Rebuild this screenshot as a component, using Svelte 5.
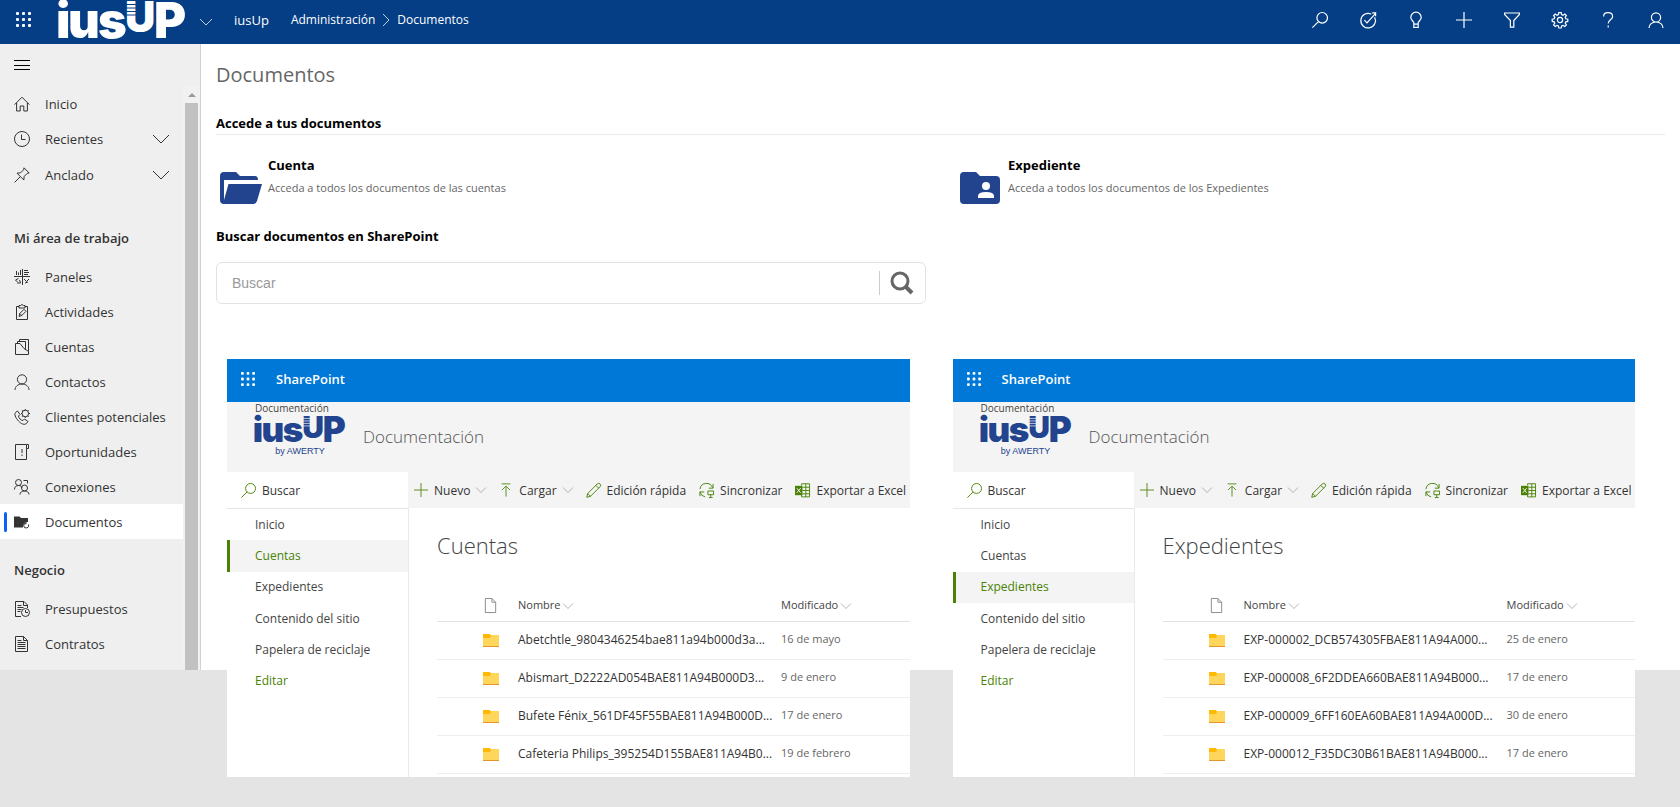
<script lang="ts">
  interface Doc {
    name: string;
    date: string;
  }
  interface Library {
    title: string;
    docs: Doc[];
  }

  // 16x16 line icons, drawn with the current colour.
  const ICONS: Record<string, string> = {
    search: "M15.5 5.8a5.3 5.3 0 1 1-10.6 0a5.3 5.3 0 0 1 10.6 0ZM6.4 9.6L.4 15.6",
    target: "M14.6 5.2A7.3 7.3 0 1 1 11.2 2M4.4 8.2l2.6 2.6L15.6 1.4M12.2.8h3.4v3.4",
    bulb: "M5.8 12V10.6C5.2 8.8 2.8 8 2.8 5.4a5.2 5.2 0 0 1 10.4 0c0 2.6-2.4 3.4-3 5.2V12M5.8 12.2h4.4v3.2H5.8Z",
    plus: "M8 0v16M0 8h16",
    filter: "M.6 1h14.8v1.4L9.8 8.6v6.6H6.4V8.6L.6 2.4Z",
    gear: "M6.8.6h2.4l.4 2 1.4.6 1.8-1.2 1.6 1.6-1.2 1.8.6 1.4 2 .4v2.2l-2 .4-.6 1.4 1.2 1.8-1.6 1.6-1.8-1.2-1.4.6-.4 2H6.8l-.4-2-1.4-.6-1.8 1.2L1.6 13l1.2-1.8-.6-1.4-2-.4V7.2l2-.4.6-1.4L1.6 3.6 3.2 2l1.8 1.2 1.4-.6ZM10.6 8a2.6 2.6 0 1 1-5.2 0a2.6 2.6 0 0 1 5.2 0Z",
    help: "M3.6 4.4C3.6 2 5.4.6 8 .6s4.600 1.400 4.600 3.800c0 3.200-4.400 3.600-4.400 7M8.200 13.600v1.800",
    person: "M12.6 5.4a4.6 4.6 0 1 1-9.200 0a4.600 4.600 0 0 1 9.200 0ZM1 16c0-3.600 3.200-6 7-6s7 2.400 7 6",
    down: "M0 4l8 8 8-8",
    right: "M4 0l8 8-8 8",
    menu: "M0 3.500h16M0 8.500h16M0 12.500h16",
    home: "M.6 8.600L8 1.200l7.400 7.400M2.600 7v8h3.600v-5h3.600v5h3.600V7",
    clock: "M15.500 8A7.500 7.500 0 1 1 .5 8a7.500 7.500 0 0 1 15 0ZM7.500 3.500v5h4",
    pin: "M10 .8l5.200 5.200-2 .4-3 3-.4 3.600-6.800-6.800 3.600-.4 3-3ZM6 10L.6 15.400",
    panels: "M0 7.500h16M8.500 0v16M2.500 6V2M4.500 6V3.500M6.500 6V1M10 1.500h4M10 3.500h5M10 5.500h4M3.500 13L1.500 11l3-1.500M3 14h3.500l-1-3M10 10l2.500 2.500L15 10M11 14l3-1",
    clipboard: "M5 2.500H2.500v13h11v-13H11M5 4V1.500h1.500L8 .5l1.500 1H11V4ZM5 12.500l.8-3L10 5.300l2 2-4.200 4.200ZM5.800 9.500l2 2",
    accounts: "M1.500 4.500H6l4 5 4.500 3v3h-13ZM3.500 4.500v-2h8v8M5.500 2.500v-2h9v12",
    leads: "M1.500 3.500L3.500 2l2.500 3.500-1.500 1.500c0 2 2.500 4.500 4.500 4.500l1.500-1.500 3.500 2.500-1.500 2c-2 1.500-4.500.8-7-1.500S-.5 6 1.500 3.500ZM14.600 4.500a3.300 3.300 0 1 1-6.600 0a3.300 3.300 0 0 1 6.600 0ZM11.300 1.200V0M11.300 7.800V9M8 4.500H7M14.600 4.500H16M8.900 2.100L8 1.200M13.700 6.900l.9.900M8.900 6.900l-.9.900M13.700 2.100l.9-.9",
    opportunity: "M12.500 .5h-11v15h11V4.500M12.500 .5h2v4h-2ZM8 5v4M8 10.500v1.500",
    links: "M7.500 3.500a3 3 0 1 1-6 0a3 3 0 0 1 6 0ZM.5 10.500c0-2.500 1.500-4 4-4s3 1 3.500 2.500M13.500 9a3 3 0 1 1-6 0a3 3 0 0 1 6 0ZM6 15.500c0-2.500 2-3.500 4.500-3.500s4.500 1 4.500 3.500M9.500 1.500h4v3",
    quote: "M7 15.500H1.500V.5H10l3.500 3.500v3M9.500.5v4h4M3.500 4.500h4M3.500 6.500h6M3.500 8.500h4M3.500 10.500h3M15.500 11.500a4 4 0 1 1-8 0a4 4 0 0 1 8 0ZM11.500 9v2.500H14",
    contract: "M9.500 .5h-8v15h12v-11ZM9.500.5v4h4M3.500 4.500h4M3.500 6.500h8M3.500 8.500h8M3.500 10.500h8M3.500 12.500h8",
    upload: "M3 1h10M8 15.500V4M3.500 8L8 3.500 12.500 8",
    pencil: "M.8 15.200l1-4L12 1a2 2 0 0 1 3 3L4.800 14.200ZM10.500 2.500l3 3M1.800 11.200l3 3",
    sync: "M1 6.500A7 7 0 0 1 14.500 5M15 1v4.500h-4.500M6.500 14.800A7 7 0 0 1 1 9.500M1 14V9.500h4.500M9.500 8.500h6v4h-6ZM12.500 12.500v3M10.500 15.500h4",
    excel: "M7 2.500V.8h8.500v14H7v-2M8 4.500h7.500M8 8h7.500M8 11.500h7.500M11.500 1v14",
    page: "M9.500.500h-7v15h11v-11ZM9.500.500v4h4",
  };

  const topActions = [
    ["search", "Buscar"],
    ["target", "Asistente"],
    ["bulb", "Sugerencias"],
    ["plus", "Crear"],
    ["filter", "Filtrar"],
    ["gear", "Configuración"],
    ["help", "Ayuda"],
    ["person", "Perfil"],
  ];

  const workItems = [
    ["panels", "Paneles"],
    ["clipboard", "Actividades"],
    ["accounts", "Cuentas"],
    ["person", "Contactos"],
    ["leads", "Clientes potenciales"],
    ["opportunity", "Oportunidades"],
    ["links", "Conexiones"],
    ["folder", "Documentos"],
  ];

  const businessItems = [
    ["quote", "Presupuestos"],
    ["contract", "Contratos"],
  ];

  const siteNav = ["Inicio", "Cuentas", "Expedientes", "Contenido del sitio", "Papelera de reciclaje", "Editar"];

  const libraries: Library[] = [
    {
      title: "Cuentas",
      docs: [
        { name: "Abetchtle_9804346254bae811a94b000d3a...", date: "16 de mayo" },
        { name: "Abismart_D2222AD054BAE811A94B000D3...", date: "9 de enero" },
        { name: "Bufete Fénix_561DF45F55BAE811A94B000D...", date: "17 de enero" },
        { name: "Cafeteria Philips_395254D155BAE811A94B0...", date: "19 de febrero" },
      ],
    },
    {
      title: "Expedientes",
      docs: [
        { name: "EXP-000002_DCB574305FBAE811A94A000...", date: "25 de enero" },
        { name: "EXP-000008_6F2DDEA660BAE811A94B000...", date: "17 de enero" },
        { name: "EXP-000009_6FF160EA60BAE811A94A000D...", date: "30 de enero" },
        { name: "EXP-000012_F35DC30B61BAE811A94B000...", date: "17 de enero" },
      ],
    },
  ];

  let query = $state("");
  let current = $state("Documentos");
</script>

{#snippet icon(name: string, size = 16)}
  <svg class="icon" width={size} height={size} viewBox="0 0 16 16" aria-hidden="true">
    {#if name === "folder"}
      <path fill="currentColor" d="M0 2.500h5.500L7 4h7v4a4.500 4.500 0 0 0-5 5.500H0Z" />
      <path class="line" d="M14.500 10.500a2.500 2.500 0 1 1-2.500-1.500M11 7.500l1.500 1.500L11 10.500" />
    {:else}
      <path class="line" d={ICONS[name]} />
      {#if name === "excel"}
        <rect fill="currentColor" x="0" y="3" width="8" height="10" />
        <path class="cut" d="M2 5.500l4 5M6 5.500l-4 5" />
      {/if}
    {/if}
  </svg>
{/snippet}

{#snippet waffle(size: number)}
  <svg class="icon" width={size} height={size} viewBox="0 0 15 15" fill="currentColor" aria-hidden="true">
    {#each [0, 6, 12] as y}
      {#each [0, 6, 12] as x}
        <rect {x} {y} width="3" height="3" rx="1" />
      {/each}
    {/each}
  </svg>
{/snippet}

{#snippet logo(cls: string)}
  <svg class={cls} viewBox="0 0 126 40" role="img" aria-label="iusUP">
    <text class="mark" y="38" font-size="49"><tspan x="-3">i</tspan><tspan x="9">u</tspan><tspan x="39">s</tspan></text>
    <text class="mark" x="66" y="32" font-size="42">U</text>
    <text class="mark" x="95" y="38" font-size="49">P</text>
    <path class="stripes" d="M66 4.500h12M66 8h12M66 11.500h12M66 15h12" />
  </svg>
{/snippet}

{#snippet navItem(name: string, label: string)}
  <li>
    <a href="#{name}" class:current={current === label} onclick={() => (current = label)}>
      {@render icon(name)}<span>{label}</span>
    </a>
  </li>
{/snippet}

<div class="page">
  <header class="top">
    <button aria-label="Aplicaciones">{@render waffle(15)}</button>
    {@render logo("brand")}
    <button class="switch" aria-label="Cambiar de aplicación">{@render icon("down", 12)}</button>
    <span class="app-name">iusUp</span>
    <nav class="crumbs" aria-label="Ruta">
      <a href="#admin">Administración</a>
      {@render icon("right", 12)}
      <a href="#docs">Documentos</a>
    </nav>
    <div class="actions">
      {#each topActions as [name, label] (name)}
        <button aria-label={label}>{@render icon(name)}</button>
      {/each}
    </div>
  </header>

  <div class="body">
    <aside>
      <button class="burger" aria-label="Menú">{@render icon("menu")}</button>
      <div class="scroll">
        <nav class="side" aria-label="Área de trabajo">
          <ul>
            {@render navItem("home", "Inicio")}
          </ul>
          <button class="expand">{@render icon("clock")}<span>Recientes</span>{@render icon("down")}</button>
          <button class="expand">{@render icon("pin")}<span>Anclado</span>{@render icon("down")}</button>
          <h2 class="first">Mi área de trabajo</h2>
          <ul>
            {#each workItems as [name, label] (label)}
              {@render navItem(name, label)}
            {/each}
          </ul>
          <h2>Negocio</h2>
          <ul>
            {#each businessItems as [name, label] (label)}
              {@render navItem(name, label)}
            {/each}
          </ul>
        </nav>
        <div class="bar" aria-hidden="true">
          <svg width="8" height="4" viewBox="0 0 8 4"><path d="M0 4L4 0l4 4Z" fill="#999" /></svg>
          <div class="thumb"></div>
        </div>
      </div>
    </aside>

    <main>
      <h1>Documentos</h1>
      <h3 class="ruled">Accede a tus documentos</h3>
      <div class="cards">
        <a class="card" href="#cuenta">
          <svg class="big" width="44" height="32" viewBox="0 0 44 32" aria-hidden="true">
            <path d="M4 0h12l4 4h15q3 0 3 4H4v20L8.500 12H42l-5 17q-1 3-4 3H4q-4 0-4-4V4q0-4 4-4Z" />
          </svg>
          <span class="card-text"><b>Cuenta</b><span>Acceda a todos los documentos de las cuentas</span></span>
        </a>
        <a class="card" href="#expediente">
          <svg class="big" width="44" height="32" viewBox="0 0 44 32" aria-hidden="true">
            <path d="M4 0h12l4 4h16q4 0 4 4v20q0 4-4 4H4q-4 0-4-4V4q0-4 4-4Z" />
            <circle cx="26" cy="14" r="4" fill="#fff" />
            <path class="white" d="M18 26v-2q0-4 8-4t8 4v2Z" />
          </svg>
          <span class="card-text"><b>Expediente</b><span>Acceda a todos los documentos de los Expedientes</span></span>
        </a>
      </div>
      <h3 class="find"><label for="q">Buscar documentos en SharePoint</label></h3>
      <form class="search" onsubmit={(e) => e.preventDefault()}>
        <input id="q" type="text" placeholder="Buscar" bind:value={query} />
        <button aria-label="Buscar">
          <svg width="24" height="24" viewBox="0 0 24 24" aria-hidden="true">
            <circle cx="10" cy="10" r="8" fill="none" stroke="#666" stroke-width="3" />
            <path d="M16 16l6 6" stroke="#666" stroke-width="4" />
          </svg>
        </button>
      </form>

      <div class="sites">
        {#each libraries as lib (lib.title)}
          <section class="site">
            <div class="suite">
              {@render waffle(14)}<b>SharePoint</b>
            </div>
            <div class="site-head">
              <div class="site-logo">
                <span>Documentación</span>
                {@render logo("mini")}
                <small>by AWERTY</small>
              </div>
              <h2>Documentación</h2>
            </div>
            <div class="commands">
              <label class="site-search">
                {@render icon("search", 15)}
                <input type="text" placeholder="Buscar" aria-label="Buscar en {lib.title}" />
              </label>
              <div class="tools">
                <button class="drop">{@render icon("plus", 14)}Nuevo{@render icon("down", 10)}</button>
                <button class="drop">{@render icon("upload", 14)}Cargar{@render icon("down", 10)}</button>
                <button>{@render icon("pencil", 15)}Edición rápida</button>
                <button>{@render icon("sync", 15)}Sincronizar</button>
                <button>{@render icon("excel", 15)}Exportar a Excel</button>
              </div>
            </div>
            <div class="site-body">
              <nav class="site-nav" aria-label="Sitio {lib.title}">
                {#each siteNav as item (item)}
                  <a href="#{item}" class:active={item === lib.title} class:edit={item === "Editar"}>{item}</a>
                {/each}
              </nav>
              <div class="list">
                <h3>{lib.title}</h3>
                <table>
                  <thead>
                    <tr>
                      <th class="type">{@render icon("page", 15)}</th>
                      <th class="name">Nombre {@render icon("down", 10)}</th>
                      <th>Modificado {@render icon("down", 10)}</th>
                    </tr>
                  </thead>
                  <tbody>
                    {#each lib.docs as doc (doc.name)}
                      <tr>
                        <td class="type">
                          <svg class="icon" width="16" height="13" viewBox="0 0 16 13" aria-hidden="true">
                            <path fill="#ffd65c" d="M0 1h16v12H0Z" />
                            <path fill="#ffb900" d="M0 0h7l1 2-1 2H0Z" />
                            <path fill="#e8932c" d="M0 12h16v1H0Z" />
                          </svg>
                        </td>
                        <td class="name">{doc.name}</td>
                        <td class="date">{doc.date}</td>
                      </tr>
                    {/each}
                  </tbody>
                </table>
              </div>
            </div>
          </section>
        {/each}
      </div>
    </main>
  </div>
</div>

<style>
  :global(body) { background: #e4e4e4; font-family: "Open Sans", "Noto Sans", sans-serif; font-size: 13px; color: #333; }
  :global(*) { box-sizing: border-box; }
  h1, h2, h3, ul { margin: 0; padding: 0; list-style: none; }
  a { color: inherit; text-decoration: none; }
  button { border: 0; padding: 0; background: none; color: inherit; font: inherit; display: flex; align-items: center; }
  input { border: 0; padding: 0; background: none; font: inherit; outline: none; min-width: 0; }
  .page { min-height: 100vh; }
  .icon { flex: none; display: block; overflow: visible; }
  .line { fill: none; stroke: currentColor; stroke-width: 1; }
  .cut { fill: none; stroke: #f4f4f4; stroke-width: 1; }

  .top { display: flex; align-items: center; height: 44px; padding: 0 16px 5px; background: #053e85; color: #fff; }
  .brand { width: 126px; height: 40px; margin-left: 28px; fill: #fff; --back: #053e85; overflow: visible; }
  .mark { font-family: Inter, sans-serif; font-weight: 900; }
  .stripes { stroke: var(--back); stroke-width: 1; }
  .switch { margin-left: 15px; padding-top: 4px; }
  .app-name { margin-left: 22px; }
  .crumbs { display: flex; align-items: center; gap: 5px; margin-left: 22px; font-size: 12px; }
  .actions { display: flex; gap: 32px; margin-left: auto; }
  .actions .line { stroke-width: 1.2; }

  .body { display: flex; background: #fff; }
  aside { flex: none; width: 201px; display: flex; flex-direction: column; background: #efefef; border-right: 1px solid #d2d2d2; }
  .burger { height: 42px; padding-left: 14px; color: #000; }
  .scroll { display: flex; flex: 1; }
  .side { flex: 1; padding-bottom: 8px; }
  .side a, .expand { display: flex; align-items: center; gap: 15px; width: 100%; height: 35px; padding-left: 14px; }
  .side a.current { background: #fff; padding-left: 6px; }
  .side a.current::before { content: ""; width: 3px; height: 20px; margin: 0 -8px 0 -2px; border-radius: 2px; background: #0b62f5; }
  .expand { height: 36px; padding-right: 14px; }
  .expand span { flex: 1; text-align: left; }
  .side h2 { margin-top: 10px; padding-left: 14px; font-size: 13px; font-weight: 600; line-height: 42px; }
  .side h2.first { margin-top: 24px; }
  .bar { width: 17px; display: flex; flex-direction: column; align-items: center; background: #f1f1f1; }
  .bar svg { margin: 7px 0 6px; }
  .thumb { flex: 1; width: 13px; background: #c1c1c1; }

  main { flex: 1; min-width: 0; padding: 15px 15px 0; }
  h1 { font-size: 20px; font-weight: 400; line-height: 32px; color: #666; }
  h3 { font-size: 13px; font-weight: 700; line-height: 20px; color: #000; }
  .ruled { margin-top: 22px; padding-bottom: 1px; border-bottom: 1px solid #eaeaea; }
  .cards { display: grid; grid-template-columns: 1fr 1fr; gap: 31px; margin-top: 20px; }
  .card { display: flex; gap: 4px; padding-left: 4px; }
  .big { margin-top: 17px; fill: #22438d; }
  .white { fill: #fff; }
  .card-text { display: flex; flex-direction: column; gap: 3px; line-height: 20px; font-size: 11px; color: #666; }
  .card b { font-size: 13px; color: #000; }
  .find { margin-top: 22px; }
  .search { display: flex; align-items: center; width: 49%; height: 42px; margin-top: 16px; border: 1px solid #e2e2e2; border-radius: 6px; }
  .search input { flex: 1; padding-left: 15px; font: 14px "Liberation Sans", Arial, sans-serif; color: #333; }
  .search input::placeholder { color: #999; opacity: 1; }
  .search button { height: 24px; padding: 0 11px 0 10px; border-left: 1px solid #ccc; }

  /* The site previews hang below the white page area. */
  .sites { display: grid; grid-template-columns: 1fr 1fr; gap: 43px; margin: 55px 30px -107px 11px; }
  .site { min-width: 0; height: 418px; background: #fff; overflow: hidden; color: #444; }
  .suite { display: flex; align-items: center; gap: 21px; height: 43px; padding: 0 14px 4px; background: #0078d7; color: #fff; }
  .suite b { font-weight: 600; }
  .site-head { display: flex; gap: 18px; height: 70px; padding-left: 28px; background: #f4f4f4; }
  .site-logo { display: flex; flex-direction: column; width: 90px; font-size: 10px; line-height: 13px; }
  .mini { width: 90px; height: 29px; fill: #22438d; --back: #f4f4f4; overflow: visible; }
  .site-logo small { font: 9px/14px "Liberation Sans", Arial, sans-serif; color: #22438d; text-align: center; }
  .site-head h2 { font-size: 17px; font-weight: 300; line-height: 70px; color: #555; }
  .commands { display: flex; height: 36px; background: #f4f4f4; }
  .site-search { flex: none; display: flex; align-items: center; gap: 6px; width: 181px; padding-left: 14px; background: #fff; color: #498205; }
  .site-search input { flex: 1; font-size: 12px; }
  .site-search input::placeholder { color: #333; opacity: 1; }
  .tools { flex: 1; min-width: 0; display: flex; gap: 13px; padding-left: 6px; font-size: 12px; white-space: nowrap; }
  .tools button { gap: 6px; color: #333; }
  .tools .icon { color: #498205; }
  .tools .drop .icon:last-child, th .icon { color: #888; }
  .site-body { display: flex; }
  .site-nav { flex: none; width: 182px; height: 270px; display: grid; grid-template-rows: repeat(6, 1fr); padding-bottom: 81px; border-top: 1px solid #e6e6e6; border-right: 1px solid #eaeaea; font-size: 12px; }
  .site-nav a { display: flex; align-items: center; padding: 0 0 1px 25px; border-left: 3px solid transparent; }
  .site-nav .active { background: #f4f4f4; border-color: #498205; color: #498205; }
  .site-nav .edit { color: #498205; }
  .list { flex: 1; min-width: 0; padding: 21px 0 0 28px; }
  .list h3 { font-size: 22px; font-weight: 300; line-height: 32px; color: #444; }
  table { width: 100%; margin-top: 28px; border-collapse: collapse; table-layout: fixed; }
  th, td { height: 38px; padding: 0; border-bottom: 1px solid #eee; text-align: left; font-weight: 400; white-space: nowrap; }
  th { height: 32px; font-size: 11px; border-color: #e2e2e2; }
  th .icon { display: inline-block; vertical-align: middle; }
  .type { width: 81px; padding-left: 46px; }
  td.name { padding-bottom: 2px; font-size: 12px; color: #333; }
  .name { width: 263px; }
  .date { padding-bottom: 4px; font-size: 11px; color: #666; }
</style>
